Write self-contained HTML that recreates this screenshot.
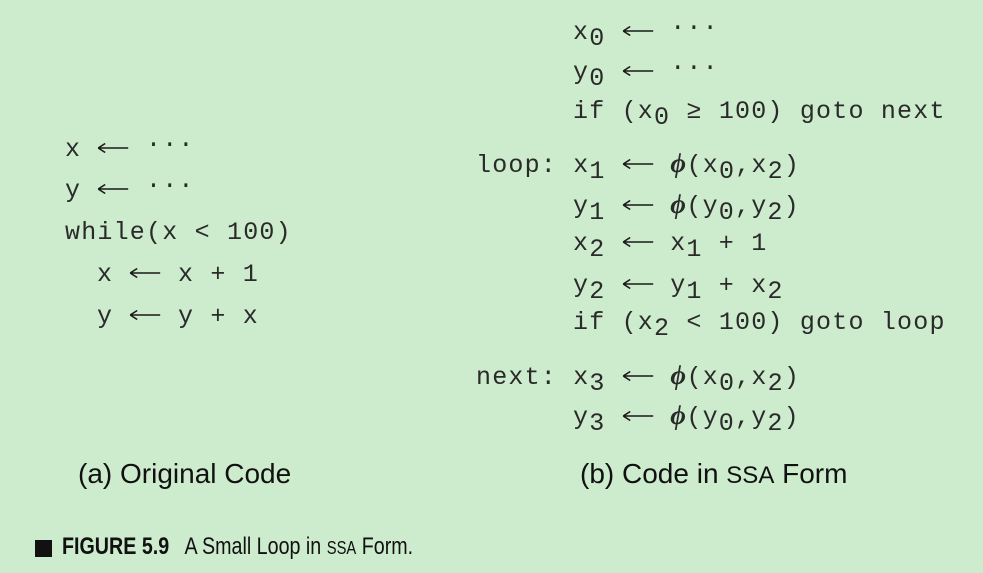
<!DOCTYPE html>
<html><head><meta charset="utf-8"><style>
body{margin:0;width:983px;height:573px;background:#cdebcd;position:relative;overflow:hidden;color:#1a1a1a}
.l{position:absolute;height:30px;line-height:30px;font-family:"Liberation Mono","DejaVu Sans Mono",monospace;font-size:25px;letter-spacing:1.2px;white-space:pre;color:#2a2a2a}
.s{position:relative;top:6px}
.d{position:relative;top:-5px}
.a{display:inline-block;width:32.4px;height:14px;vertical-align:middle;position:relative;top:-1px}
.p{font-family:"Liberation Serif",serif;font-style:italic;font-weight:bold;letter-spacing:0;display:inline-block;width:16.2px;font-size:27px}
.cap{position:absolute;font-family:"Liberation Sans",sans-serif;font-size:28px;color:#111}
</style></head><body>
<svg width="0" height="0" style="position:absolute"><defs><symbol id="ar" viewBox="0 0 32 14"><path d="M1 7H31M1 7L8 2.5M1 7L8 11.5" stroke="#1a1a1a" stroke-width="1.6" fill="none"/></symbol></defs></svg>

<div class="l" style="left:65px;top:135px">x <svg class="a"><use href="#ar"/></svg> <span class="d">···</span></div>
<div class="l" style="left:65px;top:176px">y <svg class="a"><use href="#ar"/></svg> <span class="d">···</span></div>
<div class="l" style="left:65px;top:218px">while(x &lt; 100)</div>
<div class="l" style="left:97px;top:260px">x <svg class="a"><use href="#ar"/></svg> x + 1</div>
<div class="l" style="left:97px;top:302px">y <svg class="a"><use href="#ar"/></svg> y + x</div>

<div class="l" style="left:573px;top:18px">x<span class="s">0</span> <svg class="a"><use href="#ar"/></svg> <span class="d">···</span></div>
<div class="l" style="left:573px;top:58px">y<span class="s">0</span> <svg class="a"><use href="#ar"/></svg> <span class="d">···</span></div>
<div class="l" style="left:573px;top:97px">if (x<span class="s">0</span> ≥ 100) goto next</div>
<div class="l" style="left:476px;top:148px">loop: x<span class="s">1</span> <svg class="a"><use href="#ar"/></svg> <span class="p">ϕ</span>(x<span class="s">0</span>,x<span class="s">2</span>)</div>
<div class="l" style="left:573px;top:189px">y<span class="s">1</span> <svg class="a"><use href="#ar"/></svg> <span class="p">ϕ</span>(y<span class="s">0</span>,y<span class="s">2</span>)</div>
<div class="l" style="left:573px;top:229px">x<span class="s">2</span> <svg class="a"><use href="#ar"/></svg> x<span class="s">1</span> + 1</div>
<div class="l" style="left:573px;top:271px">y<span class="s">2</span> <svg class="a"><use href="#ar"/></svg> y<span class="s">1</span> + x<span class="s">2</span></div>
<div class="l" style="left:573px;top:308px">if (x<span class="s">2</span> &lt; 100) goto loop</div>
<div class="l" style="left:476px;top:360px">next: x<span class="s">3</span> <svg class="a"><use href="#ar"/></svg> <span class="p">ϕ</span>(x<span class="s">0</span>,x<span class="s">2</span>)</div>
<div class="l" style="left:573px;top:400px">y<span class="s">3</span> <svg class="a"><use href="#ar"/></svg> <span class="p">ϕ</span>(y<span class="s">0</span>,y<span class="s">2</span>)</div>

<div class="cap" style="left:78px;top:458px">(a) Original Code</div>
<div class="cap" style="left:580px;top:458px">(b) Code in <span style="font-size:24px">SSA</span> Form</div>

<div style="position:absolute;left:35px;top:540px;width:17px;height:17px;background:#111"></div>
<div style="position:absolute;left:62px;top:533px;font-family:'Liberation Sans',sans-serif;font-size:24px;color:#111;white-space:pre;transform:scaleX(0.82);transform-origin:0 0"><b>FIGURE 5.9</b>   A Small Loop in <span style="font-size:18px">SSA</span> Form.</div>
</body></html>
